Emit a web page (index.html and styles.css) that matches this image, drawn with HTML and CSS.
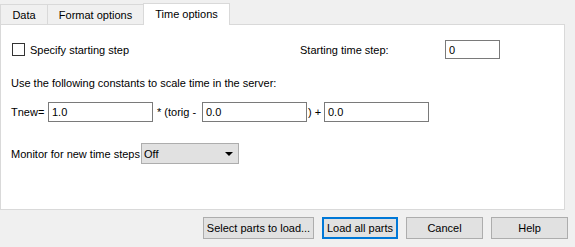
FILE: index.html
```html
<!DOCTYPE html>
<html lang="en">
<head>
    <meta charset="UTF-8">
    <title>Time options</title>
    <link rel="stylesheet" href="styles.css">
</head>
<body>
    <div class="dialog">
        <div class="tabs">
            <div class="tab tab-data">Data</div>
            <div class="tab tab-format">Format options</div>
            <div class="tab tab-time active">Time options</div>
        </div>

        <div class="panel">
            <div class="row row-start">
                <div class="check-wrap">
                    <span class="checkbox"></span>
                    <span>Specify starting step</span>
                </div>
                <div class="step-label">Starting time step:</div>
                <input type="text" class="field field-step" value="0">
            </div>

            <div class="row row-note">Use the following constants to scale time in the server:</div>

            <div class="row row-scale">
                <span class="lbl-tnew">Tnew=</span>
                <input type="text" class="field field-wide" value="1.0">
                <span class="lbl-torig">* (torig -</span>
                <input type="text" class="field field-wide" value="0.0">
                <span class="lbl-plus">) +</span>
                <input type="text" class="field field-wide" value="0.0">
            </div>

            <div class="row row-monitor">
                <span>Monitor for new time steps</span>
                <div class="combo">
                    <span>Off</span>
                    <span class="arrow"></span>
                </div>
            </div>
        </div>

        <div class="buttons">
            <button class="btn btn-select">Select parts to load...</button>
            <button class="btn btn-load focused">Load all parts</button>
            <button class="btn btn-std">Cancel</button>
            <button class="btn btn-std">Help</button>
        </div>
    </div>
</body>
</html>
```

FILE: styles.css
```css
body {
    margin: 0;
    background: #f0f0f0;
    font-family: "Liberation Sans", Arial, sans-serif;
    font-size: 11px;
    color: #000;
}
.dialog {
    width: 575px;
    height: 247px;
}
.tabs {
    display: flex;
    align-items: flex-end;
    height: 25px;
    padding-left: 0;
}
.tab {
    box-sizing: border-box;
    height: 20px;
    border: 1px solid #d9d9d9;
    border-bottom: none;
    background: #f0f0f0;
    display: flex;
    align-items: center;
    justify-content: center;
    margin-bottom: 1px;
}
.tab-data {
    width: 48px;
}
.tab-format {
    width: 96px;
    border-left: none;
}
.tab-time {
    width: 87px;
    margin-left: -1px;
}
.tab.active {
    height: 22px;
    margin-bottom: 0;
    background: #fff;
    position: relative;
    z-index: 1;
    padding-bottom: 2px;
}
.panel {
    box-sizing: border-box;
    width: 565px;
    height: 186px;
    margin-top: -1px;
    border: 1px solid #d9d9d9;
    background: #fff;
    padding: 15px 0 0 10px;
}
.row {
    display: flex;
    align-items: center;
}
.row-start {
    height: 19px;
}
.check-wrap {
    display: flex;
    align-items: center;
    width: 289px;
}
.checkbox {
    box-sizing: border-box;
    width: 13px;
    height: 13px;
    border: 1px solid #333;
    background: #fff;
    margin: 0 5px 0 1px;
}
.step-label {
    width: 145px;
}
.field {
    box-sizing: border-box;
    height: 20px;
    border: 1px solid #7a7a7a;
    background: #fff;
    font-family: "Liberation Sans", Arial, sans-serif;
    font-size: 11px;
    color: #000;
    padding: 0 0 0 3px;
    margin: 0;
    outline: none;
}
.field-step {
    width: 55px;
    height: 19px;
}
.row-note {
    margin-top: 17px;
    height: 14px;
}
.row-scale {
    margin-top: 12px;
    height: 20px;
}
.lbl-tnew {
    width: 37px;
}
.field-wide {
    width: 105px;
}
.lbl-torig {
    width: 49px;
    padding-left: 4px;
    box-sizing: border-box;
}
.lbl-plus {
    width: 17px;
    padding-left: 1px;
    box-sizing: border-box;
}
.row-monitor {
    margin-top: 21px;
    height: 21px;
}
.combo {
    box-sizing: border-box;
    width: 98px;
    height: 21px;
    margin-left: 1px;
    border: 1px solid #adadad;
    background: #e1e1e1;
    display: flex;
    align-items: center;
    justify-content: space-between;
    padding: 0 5px 0 2px;
}
.arrow {
    width: 0;
    height: 0;
    border-left: 4px solid transparent;
    border-right: 4px solid transparent;
    border-top: 4px solid #000;
}
.buttons {
    display: flex;
    justify-content: flex-end;
    gap: 8px;
    padding: 7px 7px 0 0;
}
.btn {
    box-sizing: border-box;
    height: 22px;
    border: 1px solid #adadad;
    background: #e1e1e1;
    font-family: "Liberation Sans", Arial, sans-serif;
    font-size: 11px;
    color: #000;
    padding: 0;
    margin: 0;
}
.btn-select {
    width: 111px;
}
.btn-load {
    width: 76px;
}
.btn-std {
    width: 77px;
}
.btn.focused {
    border: 2px solid #0078d7;
}
```
